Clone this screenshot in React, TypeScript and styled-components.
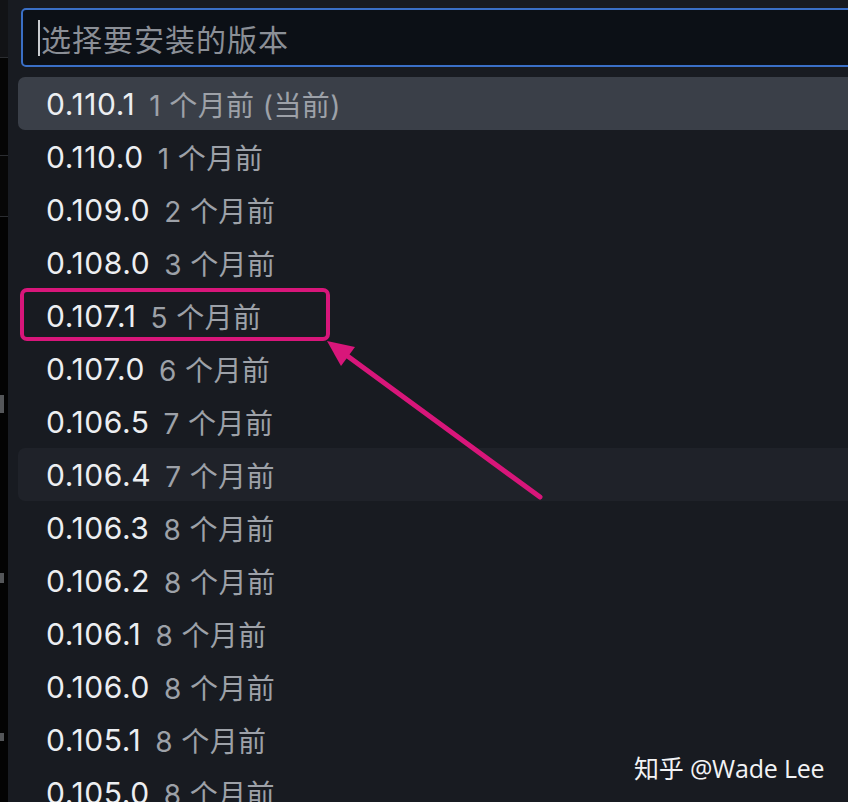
import React from 'react';
import styled, { createGlobalStyle } from 'styled-components';

const GlobalStyle = createGlobalStyle`
  html, body {
    margin: 0;
    padding: 0;
    background: #000;
    overflow: hidden;
  }
`;

const Page = styled.div`
  position: relative;
  display: flex;
  width: 848px;
  height: 802px;
  overflow: hidden;
  font-family: Inter, 'Noto Sans', 'Noto Sans CJK SC', sans-serif;
`;

const SideStrip = styled.div`
  display: flex;
  flex-direction: column;
  width: 8px;
  flex-shrink: 0;
  background: #030303;
`;

const StripBlock = styled.div<{ $h: number; $bg: string }>`
  height: ${(p) => p.$h}px;
  flex-shrink: 0;
  background: ${(p) => p.$bg};
  border-bottom: 1px solid #2b2d31;
`;

const StripMark = styled.div<{ $top: number; $h: number }>`
  margin-top: ${(p) => p.$top}px;
  flex-shrink: 0;
  width: 4px;
  height: ${(p) => p.$h}px;
  background: #8a8d92;
  opacity: 0.6;
`;

const Panel = styled.div`
  display: flex;
  flex-direction: column;
  width: 900px;
  flex-shrink: 0;
  background: #181b21;
  padding-top: 8px;
  box-sizing: border-box;
`;

const InputBox = styled.div`
  display: flex;
  align-items: center;
  flex-shrink: 0;
  height: 59px;
  margin-left: 13px;
  box-sizing: border-box;
  border: 2px solid #3a6fc6;
  border-radius: 5px;
  background: #0c1016;
  padding-left: 15px;
`;

const Caret = styled.span`
  width: 2px;
  height: 36px;
  background: #c9ccd1;
  margin-right: 1px;
`;

const Placeholder = styled.span`
  font-family: 'Noto Sans CJK SC', sans-serif;
  font-size: 30px;
  color: #8b8f96;
  letter-spacing: 1px;
`;

const List = styled.div`
  display: flex;
  flex-direction: column;
  flex-shrink: 0;
  margin-top: 10px;
  margin-left: 10px;
`;

const Row = styled.div<{ $state?: 'active' | 'hover' }>`
  display: flex;
  align-items: center;
  flex-shrink: 0;
  height: 53px;
  padding-left: 28px;
  border-radius: 7px;
  background: ${(p) =>
    p.$state === 'active' ? '#3a3f48' : p.$state === 'hover' ? '#1f2229' : 'transparent'};
`;

const Version = styled.span`
  font-size: 30px;
  color: #eceef1;
  letter-spacing: 0.6px;
`;

const Ago = styled.span`
  margin-left: 14px;
  font-size: 28px;
  color: #9da1a8;
  letter-spacing: 0.4px;
  font-family: Inter, 'Noto Sans CJK SC', sans-serif;
`;

const Highlight = styled.div`
  position: absolute;
  left: 20px;
  top: 288px;
  width: 310px;
  height: 53px;
  box-sizing: border-box;
  border: 4px solid #d8167a;
  border-radius: 7px;
`;

const ArrowLayer = styled.svg`
  position: absolute;
  left: 0;
  top: 0;
  pointer-events: none;
`;

const Watermark = styled.div`
  position: absolute;
  left: 634px;
  top: 749px;
  font-family: 'Open Sans', 'Noto Sans CJK SC', sans-serif;
  font-size: 25px;
  color: #f2f3f5;
  letter-spacing: -0.2px;
`;

const versions: { v: string; ago: string; state?: 'active' | 'hover' }[] = [
  { v: '0.110.1', ago: '1 个月前 (当前)', state: 'active' },
  { v: '0.110.0', ago: '1 个月前' },
  { v: '0.109.0', ago: '2 个月前' },
  { v: '0.108.0', ago: '3 个月前' },
  { v: '0.107.1', ago: '5 个月前' },
  { v: '0.107.0', ago: '6 个月前' },
  { v: '0.106.5', ago: '7 个月前' },
  { v: '0.106.4', ago: '7 个月前', state: 'hover' },
  { v: '0.106.3', ago: '8 个月前' },
  { v: '0.106.2', ago: '8 个月前' },
  { v: '0.106.1', ago: '8 个月前' },
  { v: '0.106.0', ago: '8 个月前' },
  { v: '0.105.1', ago: '8 个月前' },
  { v: '0.105.0', ago: '8 个月前' },
];

const App = () => {
  return (
    <Page>
      <GlobalStyle />
      <SideStrip>
        <StripBlock $h={57} $bg="#121316" />
        <StripBlock $h={97} $bg="#050505" />
        <StripBlock $h={60} $bg="#070707" />
        <StripMark $top={178} $h={18} />
        <StripMark $top={160} $h={10} />
        <StripMark $top={150} $h={8} />
      </SideStrip>
      <Panel>
        <InputBox>
          <Caret />
          <Placeholder>选择要安装的版本</Placeholder>
        </InputBox>
        <List>
          {versions.map((item) => (
            <Row key={item.v} $state={item.state}>
              <Version>{item.v}</Version>
              <Ago>{item.ago}</Ago>
            </Row>
          ))}
        </List>
      </Panel>
      <Highlight />
      <ArrowLayer width="848" height="802" viewBox="0 0 848 802">
        <line x1="540" y1="497" x2="342" y2="352" stroke="#d8167a" strokeWidth="5" strokeLinecap="round" />
        <polygon points="327,341 341,366 355,347" fill="#d8167a" />
      </ArrowLayer>
      <Watermark>知乎 @Wade Lee</Watermark>
    </Page>
  );
};

export default App;
